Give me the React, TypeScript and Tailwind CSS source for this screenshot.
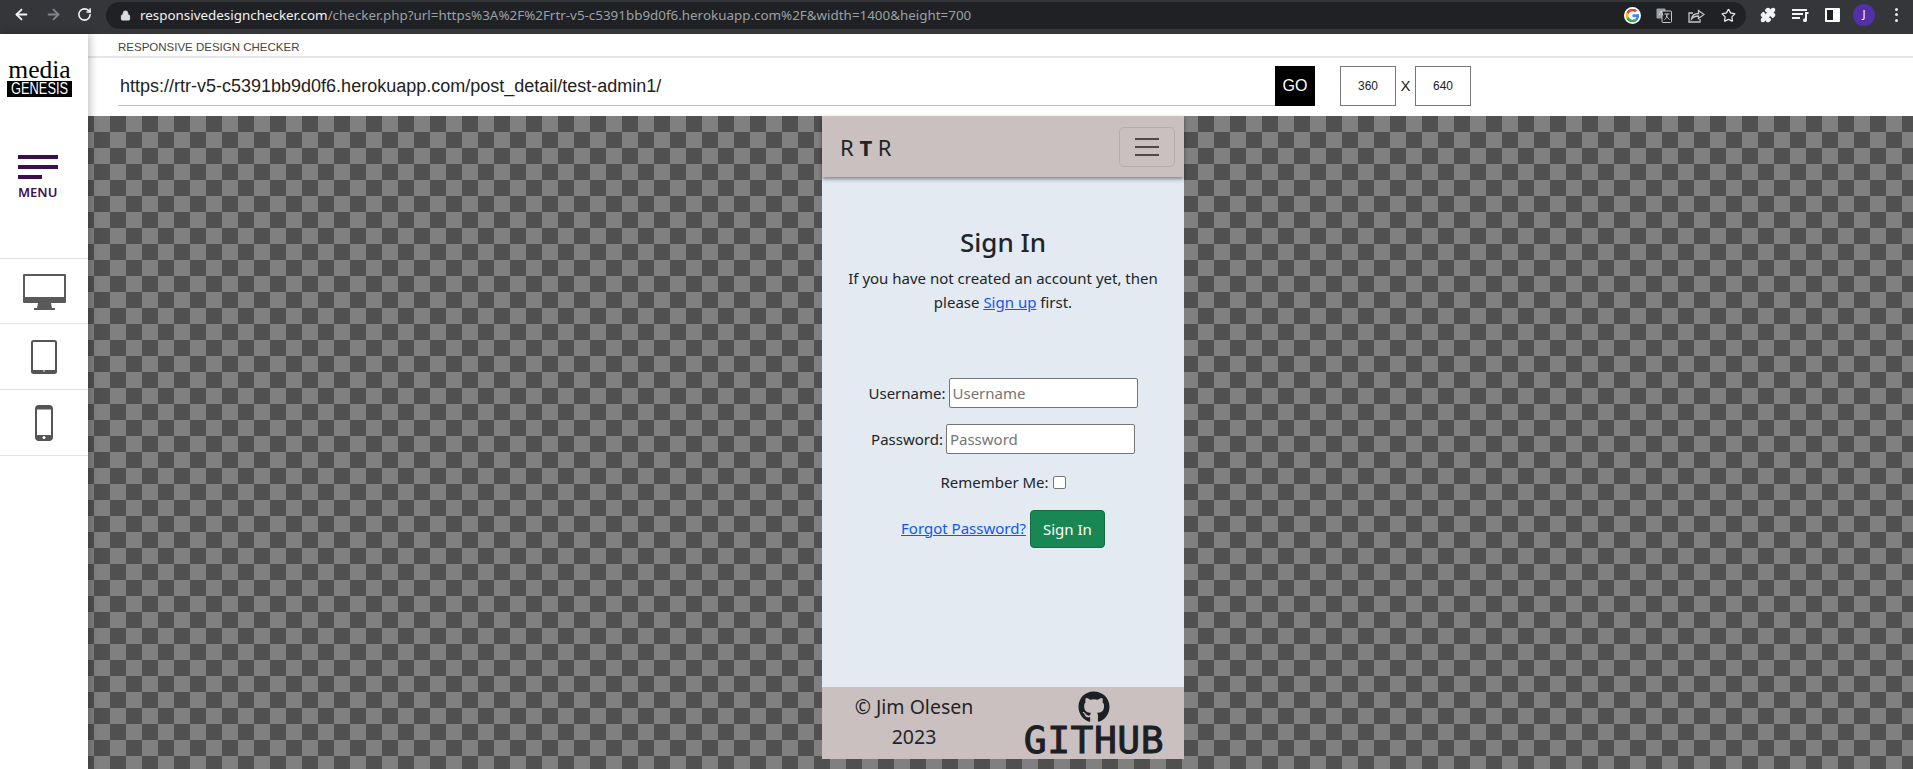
import { ArrowLeft, ArrowRight, RotateCw, Lock, Star, Puzzle } from "lucide-react";
import { FaGithub } from "react-icons/fa";

function GoogleIcon() {
  return (
    <svg width="17" height="17" viewBox="0 0 48 48" className="rounded-full bg-white p-[1.5px]">
      <path fill="#EA4335" d="M24 9.500c3.500 0 6.700 1.200 9.200 3.600l6.900-6.900C35.900 2.400 30.500 0 24 0 14.600 0 6.500 5.400 2.600 13.200l8 6.200C12.500 13.700 17.800 9.500 24 9.500z" />
      <path fill="#4285F4" d="M47 24.500c0-1.600-.1-3.100-.4-4.500H24v9h13c-.6 3-2.300 5.500-4.800 7.200l7.700 6c4.500-4.200 7.100-10.300 7.100-17.700z" />
      <path fill="#FBBC05" d="M10.500 28.600c-.5-1.400-.8-3-.8-4.600s.3-3.200.8-4.600l-8-6.200C.9 16.400 0 20.100 0 24s.9 7.600 2.600 10.800l7.900-6.200z" />
      <path fill="#34A853" d="M24 48c6.500 0 11.900-2.100 15.900-5.800l-7.700-6c-2.200 1.400-4.900 2.300-8.200 2.300-6.200 0-11.500-4.200-13.400-9.900l-8 6.200C6.500 42.600 14.600 48 24 48z" />
    </svg>
  );
}

function TranslateIcon() {
  return (
    <svg width="16" height="15" viewBox="0 0 16 15">
      <rect x="0.500" y="0.500" width="9" height="10" rx="1" fill="#9aa0a6" />
      <rect x="6" y="3" width="9.500" height="11.500" rx="1" fill="#202124" stroke="#c4c7c5" />
      <path d="M3 7.500 5 3l2 4.500M8.500 6h5M11 6c0 3-1 4.500-2.500 5.500M10.500 7.500c.5 2 1.500 3 3 4" fill="none" stroke="#d0d3d6" strokeWidth="1" />
    </svg>
  );
}

function ShareIcon() {
  return (
    <svg width="17" height="15" viewBox="0 0 17 15" fill="none" stroke="#c4c7c5" strokeWidth="1.300">
      <path d="M5 5H1v9h11v-3" />
      <path d="M3.500 11c.5-3.500 3-5.500 7-5.500V2.500L16 6.500l-5.500 4V8c-3 0-5.200.8-7 3z" />
    </svg>
  );
}

function MediaIcon() {
  return (
    <svg width="17" height="14" viewBox="0 0 17 14" fill="#f1f3f4">
      <rect x="0" y="1" width="15" height="2" />
      <rect x="0" y="5" width="11" height="2" />
      <rect x="0" y="9" width="8" height="2" />
      <path d="M13 4h3.500v2H15v6a2 2 0 1 1-2-1.800z" />
    </svg>
  );
}

function BrowserBar() {
  return (
    <div className="flex h-[34px] shrink-0 items-start bg-[#35363a]">
      <div className="flex h-[29px] w-[106px] shrink-0 items-center gap-[15px] pl-[13px]">
        <ArrowLeft size={17} color="#f1f3f4" strokeWidth={2.5} />
        <ArrowRight size={17} color="#80868b" strokeWidth={2.5} />
        <RotateCw size={15} color="#f1f3f4" strokeWidth={2.5} />
      </div>
      <div className="mt-[2px] flex h-[27px] w-[1640px] shrink-0 items-center rounded-full bg-[#202124] pl-[14px]">
        <Lock size={11} color="#dadce0" fill="#dadce0" />
        <span className="ml-[9px] text-[13.400px] text-[#f1f3f4]">responsivedesignchecker.com</span>
        <span className="text-[13.400px] text-[#9aa0a6]">/checker.php?url=https%3A%2F%2Frtr-v5-c5391bb9d0f6.herokuapp.com%2F&amp;width=1400&amp;height=700</span>
        <div className="ml-auto flex items-center pr-[2px]">
          <div className="flex w-[32px] justify-center"><GoogleIcon /></div>
          <div className="flex w-[32px] justify-center"><TranslateIcon /></div>
          <div className="flex w-[32px] justify-center"><ShareIcon /></div>
          <div className="flex w-[32px] justify-center"><Star size={15} color="#e8eaed" strokeWidth={2} /></div>
        </div>
      </div>
      <div className="flex h-[29px] flex-1 items-center pl-[6px]">
        <div className="flex w-[32px] justify-center"><Puzzle size={16} color="#f1f3f4" fill="#f1f3f4" /></div>
        <div className="flex w-[32px] justify-center"><MediaIcon /></div>
        <div className="flex w-[32px] justify-center">
          <div className="flex h-[14px] w-[15px] rounded-[1px] bg-white p-[2px] pr-[7px]">
            <div className="h-full w-full bg-[#202124]" />
          </div>
        </div>
        <div className="flex w-[32px] justify-center">
          <div className="flex h-[22px] w-[22px] items-center justify-center rounded-full bg-[#5230a8] text-[11px] text-white">J</div>
        </div>
        <div className="flex w-[32px] flex-col items-center gap-[2.5px]">
          <div className="h-[3px] w-[3px] rounded-full bg-[#e8eaed]" />
          <div className="h-[3px] w-[3px] rounded-full bg-[#e8eaed]" />
          <div className="h-[3px] w-[3px] rounded-full bg-[#e8eaed]" />
        </div>
      </div>
    </div>
  );
}

function Sidebar() {
  return (
    <div className="relative z-10 flex w-[88px] shrink-0 flex-col bg-white shadow-[2px_0_8px_rgba(0,0,0,0.25)]">
      <div className="flex h-[224px] shrink-0 flex-col">
        <div className="ml-[7px] mt-[26px] flex w-[65px] flex-col items-center">
          <div className="font-['Liberation_Serif',serif] text-[25.500px] leading-[20px] text-black">media</div>
          <div className="mt-[1px] flex h-[16px] w-[65px] items-center justify-center overflow-hidden bg-black font-['Liberation_Sans',sans-serif] text-[16px] text-white">
            <span className="scale-x-[0.8]">GENESIS</span>
          </div>
        </div>
        <div className="ml-[18px] mt-[58px] flex flex-col gap-[6px]">
          <div className="h-[4px] w-[40px] bg-[#3b0f4f]" />
          <div className="h-[4px] w-[40px] bg-[#3b0f4f]" />
          <div className="h-[4px] w-[24px] bg-[#3b0f4f]" />
        </div>
        <div className="ml-[18px] mt-[4px] text-[13px] font-semibold leading-[18px] text-[#3b0f4f]">MENU</div>
      </div>
      <div className="flex h-[66px] items-center justify-center border-y border-[#e2e2e2]">
        <svg width="43" height="36" viewBox="0 0 43 36" className="mt-[2px]">
          <path fill="#5a5a5a" fillRule="evenodd" d="M1 0h41a1 1 0 0 1 1 1v27a1 1 0 0 1-1 1H28l1 5h3v2H11v-2h3l1-5H1a1 1 0 0 1-1-1V1a1 1 0 0 1 1-1zm1 2v21h39V2z" />
        </svg>
      </div>
      <div className="flex h-[66px] items-center justify-center border-b border-[#e2e2e2]">
        <svg width="26" height="34" viewBox="0 0 26 34">
          <rect x="1" y="1" width="24" height="32" rx="1.500" fill="#fff" stroke="#555" strokeWidth="2" />
          <rect x="2" y="30" width="22" height="2" fill="#555" />
          <circle cx="13" cy="31" r="0.800" fill="#fff" />
        </svg>
      </div>
      <div className="flex h-[66px] items-center justify-center border-b border-[#e2e2e2]">
        <svg width="18" height="36" viewBox="0 0 18 36">
          <rect x="1" y="1" width="16" height="34" rx="3" fill="#fff" stroke="#555" strokeWidth="2" />
          <rect x="1" y="1" width="16" height="3.500" rx="1.500" fill="#555" />
          <rect x="1" y="30" width="16" height="5" rx="2" fill="#555" />
          <circle cx="9" cy="32.500" r="1.500" fill="#fff" />
        </svg>
      </div>
    </div>
  );
}

function CheckerHeader() {
  return (
    <div className="flex h-[82px] shrink-0 flex-col bg-white font-['Liberation_Sans',sans-serif]">
      <div className="h-[24px] shrink-0 border-b-2 border-[#e5e5e5] pl-[30px] pt-[5px] text-[11.500px] leading-[16px] text-[#444]">
        RESPONSIVE DESIGN CHECKER
      </div>
      <div className="flex h-[40px] items-start pl-[30px] pt-[8px]">
        <div className="h-[40px] w-[1157px] border-b border-[#bbb] pl-[2px] pt-[9px] text-[18px] leading-[22px] text-[#222]">
          https://rtr-v5-c5391bb9d0f6.herokuapp.com/post_detail/test-admin1/
        </div>
        <div className="flex h-[40px] w-[40px] items-center justify-center bg-black text-[16px] text-white">GO</div>
        <div className="ml-[25px] flex h-[40px] w-[56px] items-center justify-center border border-[#777] text-[12px] text-[#222]">360</div>
        <div className="flex h-[40px] w-[19px] items-center justify-center text-[15px] text-[#222]">X</div>
        <div className="flex h-[40px] w-[56px] items-center justify-center border border-[#777] text-[12px] text-[#222]">640</div>
      </div>
    </div>
  );
}

function Phone() {
  return (
    <div className="flex h-[643px] w-[362px] shrink-0 flex-col bg-[#e3eaf2] font-['Noto_Sans',sans-serif] text-[15px] text-[#212529]">
      <div className="relative flex h-[61px] shrink-0 items-center justify-between bg-[#cbc0c0] pl-[18px] pr-[9px] shadow-[0_2px_4px_rgba(0,0,0,0.45)]">
        <div className="text-[22px] leading-[28px]">
          R <span className="font-bold">T</span> R
        </div>
        <div className="flex h-[40px] w-[56px] flex-col items-center justify-center gap-[6px] rounded-[5px] border border-black/10">
          <div className="h-[2px] w-[24px] bg-[#4f4a4a]" />
          <div className="h-[2px] w-[24px] bg-[#4f4a4a]" />
          <div className="h-[2px] w-[24px] bg-[#4f4a4a]" />
        </div>
      </div>
      <div className="flex flex-1 flex-col items-center pt-[46px]">
        <h1 className="text-[26px] font-medium leading-[38px]">Sign In</h1>
        <p className="mt-[5px] w-[330px] text-center leading-[24px]">
          If you have not created an account yet, then please <a className="text-[#1257f0] underline">Sign up</a> first.
        </p>
        <div className="mt-[64px] flex h-[30px] items-center gap-[3px]">
          <label>Username:</label>
          <input placeholder="Username" className="h-[30px] w-[189px] rounded-[2px] border border-[#767676] bg-white px-[3px] text-[15px] placeholder:text-[#757575]" />
        </div>
        <div className="mt-[16px] flex h-[30px] items-center gap-[3px]">
          <label>Password:</label>
          <input placeholder="Password" className="h-[30px] w-[189px] rounded-[2px] border border-[#767676] bg-white px-[3px] text-[15px] placeholder:text-[#757575]" />
        </div>
        <div className="mt-[16px] flex h-[24px] items-center gap-[4px]">
          <label>Remember Me:</label>
          <input type="checkbox" className="h-[13px] w-[13px] appearance-none rounded-[2px] border border-[#767676] bg-white" />
        </div>
        <div className="mt-[16px] flex items-center gap-[4px]">
          <a className="pb-[2px] text-[#1257f0] underline">Forgot Password?</a>
          <button className="h-[38px] w-[75px] rounded-[4px] border border-[#146c43] bg-[#198754] text-white">Sign In</button>
        </div>
      </div>
      <div className="flex h-[72px] shrink-0 bg-[#cbc0c0]">
        <div className="flex w-[182px] flex-col items-center pl-[2px] pt-[5px] text-[19.500px] leading-[30px]">
          <span>© Jim Olesen</span>
          <span>2023</span>
        </div>
        <div className="flex flex-1 flex-col items-center text-[#1c2024]">
          <FaGithub size={32} className="mt-[4px]" />
          <div className="mt-[3px] font-['DejaVu_Sans_Mono',monospace] text-[38px] leading-[28px] tracking-[0.500px] [-webkit-text-stroke:1px_#1c2024]">GITHUB</div>
        </div>
      </div>
    </div>
  );
}

export default function App() {
  return (
    <div className="flex h-[769px] w-[1913px] flex-col overflow-hidden">
      <BrowserBar />
      <div className="flex min-h-0 flex-1">
        <Sidebar />
        <div className="flex min-w-0 flex-1 flex-col">
          <CheckerHeader />
          <div className="flex flex-1 justify-center bg-[repeating-conic-gradient(#505050_0_25%,#808080_0_50%)] bg-[length:32px_32px] bg-[position:6px_0px] pl-[5px]">
            <Phone />
          </div>
        </div>
      </div>
    </div>
  );
}
